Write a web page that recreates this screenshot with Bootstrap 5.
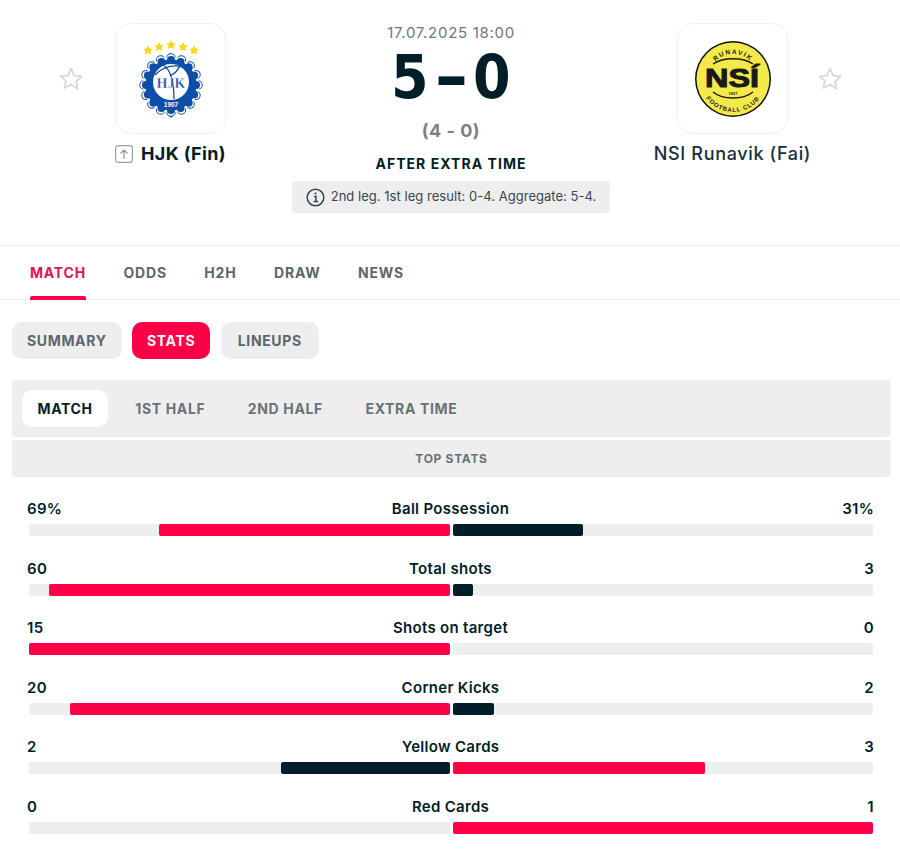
<!DOCTYPE html>
<html lang="en"><head><meta charset="utf-8"><title>HJK - NSI Runavik</title>
<link href="https://cdn.jsdelivr.net/npm/bootstrap@5.3.0/dist/css/bootstrap.min.css" rel="stylesheet">
<style>
body{font-family:Inter,"Liberation Sans",sans-serif;color:#001e28;background:#fff;overflow:hidden}
.match-head{height:246px;border-bottom:1px solid #eee;padding-top:23px;display:grid;grid-template-columns:1fr 340px 1fr}
.star-ico{width:26px;height:26px;flex:none;margin-top:43px}
.star-left{margin-left:58px;margin-right:31px}
.star-right{margin-left:29px;margin-right:57px}
.team-col{width:111px}
.logo-box{width:111px;height:111px;border:1px solid #f1f1f1;border-radius:16px;display:flex;align-items:center;justify-content:center;background:#fff}
.team-name{font-size:18px;line-height:20px;margin:10px -50px 0;white-space:nowrap;display:flex;justify-content:center;align-items:center;letter-spacing:.65px;font-weight:500;color:#15303a}
.team-strong{font-weight:700;letter-spacing:.35px;color:#001e28}
.up-ico{width:18px;height:18px;margin-right:8px}
.mid-col{text-align:center;padding-left:2px}
.date-line{font-size:15px;line-height:20px;color:#6e7780;letter-spacing:.7px}
.score-line{font-family:"DejaVu Sans",sans-serif;font-size:60px;font-weight:700;line-height:62px;margin-top:3px;height:72px;display:flex;justify-content:center;gap:2px}
.score-num{display:inline-block;transform:scaleX(.9)}
.score-dash{display:inline-block;transform:scaleX(1.4);margin:0 6px}
.ht-line{font-size:18px;font-weight:700;color:#7b8186;line-height:22px;margin-top:2px;letter-spacing:.5px}
.status-line{font-size:14px;font-weight:700;letter-spacing:1.05px;line-height:20px;margin-top:12px}
.info-chip{display:inline-flex;align-items:center;gap:6px;background:#eee;border-radius:4px;height:32px;padding:0 14px;font-size:13px;letter-spacing:.03px;color:#3b4650;margin-top:7px;white-space:nowrap}
.main-tabs{height:54px;border-bottom:1px solid #eee;padding-left:30px;gap:37.5px}
.main-tab{font-size:14px;font-weight:700;letter-spacing:.8px;color:#5c666e;height:54px;line-height:53px;position:relative}
.main-tab.on{color:#e8124f}
.main-tab.on::after{content:"";position:absolute;left:0;right:0;bottom:0;height:4px;background:#ff0046;border-radius:2px 2px 0 0}
.pill-row{padding:22px 12px 0;gap:10.5px}
.pill-btn{height:37px;line-height:37px;border-radius:10px;background:#eee;color:#5c666e;font-size:14px;font-weight:700;letter-spacing:.65px;padding:0 15px;text-align:center}
.pill-btn.on{background:#ff0046;color:#fff}
.pill-wide{min-width:98px}
.sub-bar{margin:21px 9px 0 12px;height:57px;background:#eee;border-radius:4px;padding:10px 10px;gap:11.5px;align-items:flex-start}
.sub-btn{height:37px;line-height:37px;border-radius:10px;font-size:14px;font-weight:700;letter-spacing:.65px;color:#6a7278;padding:0 15.5px}
.sub-btn.on{background:#fff;color:#001e28}
.top-band{margin:3px 9px 0 12px;height:37px;line-height:37px;background:#eee;border-radius:4px;text-align:center;font-size:12px;font-weight:700;letter-spacing:.7px;color:#6a7278}
.stat-list{padding:21px 27px 0 29px}
.stat-row{height:59.5px}
.stat-top{height:21px;line-height:21px;font-size:15px;font-weight:600;margin-left:-2px;margin-right:-1px;display:grid;grid-template-columns:1fr auto 1fr;letter-spacing:.3px}
.stat-val-r{text-align:right}
.stat-bars{display:flex;gap:3px;height:12px;margin-top:5px}
.bar-track{flex:1 1 0;background:#eee;display:flex;border-radius:2px}
.bar-track.home{justify-content:flex-end}
.bar-fill{height:12px;border-radius:2px}
.fill-red{background:#ff0046}
.fill-dark{background:#001e28}
</style></head><body>
<div class="match-head">
 <div class="d-flex align-items-start">
  <svg class="star-ico star-left" viewBox="0 0 24 24"><path d="M12 2.5l2.9 6.3 6.9.8-5.100 4.700 1.400 6.800L12 17l-6.100 3.400 1.400-6.800L2.200 9.600l6.900-.8z" fill="none" stroke="#d4d6d8" stroke-width="1.600" stroke-linejoin="round"/></svg>
  <div class="team-col">
   <div class="logo-box">
    <svg width="66" height="78" viewBox="0 0 66 78">
     <g fill="#f7d917">
      <path d="M10 5.500l1.500 3 3.300.4-2.400 2.300.6 3.300-3-1.600-3 1.600.6-3.300-2.400-2.300 3.300-.4z"/>
      <path d="M21 2l1.500 3 3.300.4-2.400 2.300.6 3.300-3-1.600-3 1.600.6-3.300-2.400-2.300 3.300-.4z"/>
      <path d="M33 0l1.500 3 3.300.4-2.400 2.300.6 3.300-3-1.600-3 1.600.6-3.300-2.400-2.300 3.300-.4z"/>
      <path d="M45 2l1.500 3 3.300.4-2.400 2.300.6 3.300-3-1.600-3 1.600.6-3.300-2.400-2.300 3.300-.4z"/>
      <path d="M56 5.500l1.500 3 3.300.4-2.400 2.300.6 3.300-3-1.600-3 1.600.6-3.300-2.400-2.300 3.300-.4z"/>
     </g>
     <path d="M24 68l9 10 9-10z" fill="#0d4ea6"/>
     <circle cx="33" cy="45" r="27" fill="none" stroke="#0d4ea6" stroke-width="9.500" stroke-linecap="round" stroke-dasharray="0 1" pathLength="16"/>
     <circle cx="33" cy="45" r="27" fill="none" stroke="#fff" stroke-width="7.500" stroke-linecap="round" stroke-dasharray="0 1" pathLength="16"/>
     <circle cx="33" cy="45" r="28" fill="#fff"/>
     <circle cx="33" cy="45" r="25" fill="none" stroke="#0d4ea6" stroke-width="8" stroke-linecap="round" stroke-dasharray="0 1" pathLength="16"/>
     <circle cx="33" cy="45" r="25.500" fill="#0d4ea6"/>
     <circle cx="33" cy="42" r="18" fill="#fff"/>
     <path d="M17 35c8-9 22-12 32-6M25 25c7 4 11 14 11 34M42 25c-2 6-6 9-10 11" fill="none" stroke="#0d4ea6" stroke-width="1.300"/>
     <text x="33" y="48" text-anchor="middle" font-size="14" font-weight="700" font-family="Liberation Serif" fill="#0d4ea6" stroke="#fff" stroke-width=".3">HJK</text>
     <text x="33" y="67" text-anchor="middle" font-size="6.500" font-weight="700" font-family="Liberation Sans" fill="#fff">1907</text>
    </svg>
   </div>
   <div class="team-name team-strong"><svg class="up-ico" viewBox="0 0 18 18"><rect x=".6" y=".6" width="16.800" height="16.800" rx="2.500" fill="#fff" stroke="#9aa0a5" stroke-width="1.200"/><path d="M9 14V5M5.500 8.500L9 5l3.500 3.500" fill="none" stroke="#8a9096" stroke-width="1.200"/></svg>HJK (Fin)</div>
  </div>
 </div>
 <div class="mid-col">
  <div class="date-line">17.07.2025 18:00</div>
  <div class="score-line"><span class="score-num">5</span><span class="score-dash">-</span><span class="score-num">0</span></div>
  <div class="ht-line">(4 - 0)</div>
  <div class="status-line">AFTER EXTRA TIME</div>
  <div class="info-chip"><svg width="19" height="19" viewBox="0 0 19 19"><circle cx="9.500" cy="9.500" r="8.300" fill="none" stroke="#3b4650" stroke-width="1.500"/><path d="M8 8.500h2v4.500M7.500 13.500h4.500" fill="none" stroke="#3b4650" stroke-width="1.500"/><circle cx="9.500" cy="5.500" r="1.100" fill="#3b4650"/></svg><span>2nd leg. 1st leg result: 0-4. Aggregate: 5-4.</span></div>
 </div>
 <div class="d-flex align-items-start justify-content-end">
  <div class="team-col">
   <div class="logo-box">
    <svg width="78" height="78" viewBox="0 0 78 78">
     <defs><path id="arcT" d="M14 39a25 25 0 0 1 50 0"/><path id="arcB" d="M6 39a33 33 0 0 0 66 0"/></defs>
     <circle cx="39" cy="39" r="38" fill="#0e0f0c"/><circle cx="39" cy="39" r="36.500" fill="#f4e94a"/>
     <text font-size="6.500" font-weight="700" font-family="Liberation Sans" fill="#1a1a14" letter-spacing="1.400"><textPath href="#arcT" startOffset="50%" text-anchor="middle">RUNAVÍK</textPath></text>
     <text font-size="6" font-weight="700" font-family="Liberation Sans" fill="#1a1a14" letter-spacing=".9"><textPath href="#arcB" startOffset="50%" text-anchor="middle">FOOTBALL CLUB</textPath></text>
     <path d="M19 24c10-7 30-7 40 0M19 52c10 8 30 8 40 0" fill="none" stroke="#1a1a14" stroke-width="1.500"/>
     <text x="38" y="47" text-anchor="middle" font-size="26" font-weight="700" font-family="Liberation Sans" fill="#1a1a14" textLength="54" lengthAdjust="spacingAndGlyphs" stroke="#1a1a14" stroke-width="1">NSÍ</text>
     <text x="39" y="55" text-anchor="middle" font-size="4" font-weight="700" font-family="Liberation Sans" fill="#1a1a14">1957</text>
    </svg>
   </div>
   <div class="team-name">NSI Runavik (Fai)</div>
  </div>
  <svg class="star-ico star-right" viewBox="0 0 24 24"><path d="M12 2.5l2.9 6.3 6.9.8-5.100 4.700 1.400 6.800L12 17l-6.100 3.400 1.400-6.800L2.200 9.600l6.900-.8z" fill="none" stroke="#d4d6d8" stroke-width="1.600" stroke-linejoin="round"/></svg>
 </div>
</div>
<div class="main-tabs d-flex"><span class="main-tab on">MATCH</span><span class="main-tab">ODDS</span><span class="main-tab">H2H</span><span class="main-tab">DRAW</span><span class="main-tab">NEWS</span></div>
<div class="pill-row d-flex"><span class="pill-btn">SUMMARY</span><span class="pill-btn on">STATS</span><span class="pill-btn pill-wide">LINEUPS</span></div>
<div class="sub-bar d-flex"><span class="sub-btn on">MATCH</span><span class="sub-btn">1ST HALF</span><span class="sub-btn">2ND HALF</span><span class="sub-btn">EXTRA TIME</span></div>
<div class="top-band">TOP STATS</div>
<div class="stat-list">
 <div class="stat-row"><div class="stat-top"><span>69%</span><span>Ball Possession</span><span class="stat-val-r">31%</span></div><div class="stat-bars"><div class="bar-track home"><div class="bar-fill fill-red" style="width:69%"></div></div><div class="bar-track"><div class="bar-fill fill-dark" style="width:31%"></div></div></div></div>
 <div class="stat-row"><div class="stat-top"><span>60</span><span>Total shots</span><span class="stat-val-r">3</span></div><div class="stat-bars"><div class="bar-track home"><div class="bar-fill fill-red" style="width:95.2%"></div></div><div class="bar-track"><div class="bar-fill fill-dark" style="width:4.800%"></div></div></div></div>
 <div class="stat-row"><div class="stat-top"><span>15</span><span>Shots on target</span><span class="stat-val-r">0</span></div><div class="stat-bars"><div class="bar-track home"><div class="bar-fill fill-red" style="width:100%"></div></div><div class="bar-track"></div></div></div>
 <div class="stat-row"><div class="stat-top"><span>20</span><span>Corner Kicks</span><span class="stat-val-r">2</span></div><div class="stat-bars"><div class="bar-track home"><div class="bar-fill fill-red" style="width:90.2%"></div></div><div class="bar-track"><div class="bar-fill fill-dark" style="width:9.800%"></div></div></div></div>
 <div class="stat-row"><div class="stat-top"><span>2</span><span>Yellow Cards</span><span class="stat-val-r">3</span></div><div class="stat-bars"><div class="bar-track home"><div class="bar-fill fill-dark" style="width:40%"></div></div><div class="bar-track"><div class="bar-fill fill-red" style="width:60%"></div></div></div></div>
 <div class="stat-row"><div class="stat-top"><span>0</span><span>Red Cards</span><span class="stat-val-r">1</span></div><div class="stat-bars"><div class="bar-track home"></div><div class="bar-track"><div class="bar-fill fill-red" style="width:100%"></div></div></div></div>
</div>
</body></html>
